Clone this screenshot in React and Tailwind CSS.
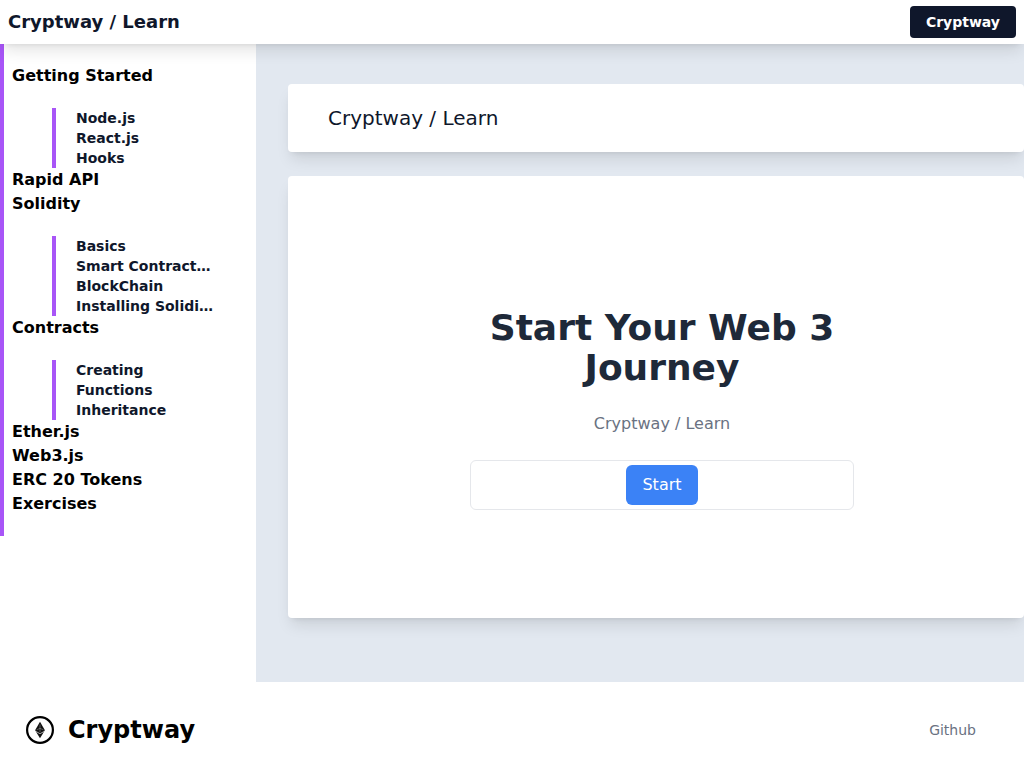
const sections = [
  { title: 'Getting Started', items: ['Node.js', 'React.js', 'Hooks'] },
  { title: 'Rapid API' },
  { title: 'Solidity', items: ['Basics', 'Smart Contract…', 'BlockChain', 'Installing Solidi…'] },
  { title: 'Contracts', items: ['Creating', 'Functions', 'Inheritance'] },
  { title: 'Ether.js' },
  { title: 'Web3.js' },
  { title: 'ERC 20 Tokens' },
  { title: 'Exercises' },
];

function Header() {
  return (
    <header className="relative z-10 flex h-11 items-center justify-between bg-white px-2 shadow-lg">
      <span className="text-lg font-bold text-slate-900">Cryptway / Learn</span>
      <button className="h-8 rounded bg-slate-900 px-4 text-sm font-bold text-white">Cryptway</button>
    </header>
  );
}

function Sidebar() {
  return (
    <aside className="w-64 shrink-0 bg-white">
      <nav className="h-[492px] border-l-4 border-[#a855f7] pt-5 pl-2">
        {sections.map((section) => (
          <div key={section.title}>
            <h2 className="text-base font-bold text-black">{section.title}</h2>
            {section.items && (
              <ul className="mt-5 ml-10 border-l-4 border-[#a855f7] pl-5">
                {section.items.map((item) => (
                  <li key={item} className="text-sm font-bold whitespace-nowrap text-slate-900">{item}</li>
                ))}
              </ul>
            )}
          </div>
        ))}
      </nav>
    </aside>
  );
}

function EthereumLogo() {
  return (
    <svg className="h-8 w-8" viewBox="0 0 32 32" fill="none">
      <circle cx="16" cy="16" r="12.9" stroke="#000" strokeWidth="2.2" />
      <path d="M16 7.8l4.9 8.4L16 24.2l-4.9-8z" fill="#111" />
      <path d="M16 10.5v7.5M12.6 15.8l3.4-1.4 3.4 1.4" stroke="#fff" strokeOpacity=".5" strokeWidth=".6" />
      <path d="M11.4 17.2l4.6 2.5 4.6-2.5" stroke="#fff" strokeOpacity=".8" strokeWidth=".8" />
    </svg>
  );
}

export default function App() {
  return (
    <div className="flex h-screen flex-col overflow-hidden bg-white font-['DejaVu_Sans',sans-serif]">
      <Header />
      <div className="flex h-[638px] shrink-0">
        <Sidebar />
        <main className="flex-1 bg-[#e2e8f0] pt-10 pl-8">
          <div className="flex h-17 items-center rounded bg-white pl-10 text-xl text-slate-900 shadow-lg">Cryptway / Learn</div>
          <section className="mt-6 flex h-[442px] flex-col items-center rounded bg-white pt-33 pl-3 text-center shadow-lg">
            <h1 className="w-96 text-4xl leading-10 font-bold text-gray-800">Start Your Web 3 Journey</h1>
            <p className="mt-6 text-base text-gray-500">Cryptway / Learn</p>
            <div className="mt-6 flex w-96 justify-center rounded-md border border-gray-200 p-1">
              <button className="h-10 rounded-md bg-[#3b82f6] px-4 text-base text-white">Start</button>
            </div>
          </section>
        </main>
      </div>
      <footer className="flex flex-1 items-center justify-between bg-white pt-2.5 pr-12 pl-6">
        <div className="flex items-center gap-3">
          <EthereumLogo />
          <span className="text-2xl font-bold text-black">Cryptway</span>
        </div>
        <a className="text-sm text-gray-500">Github</a>
      </footer>
    </div>
  );
}
